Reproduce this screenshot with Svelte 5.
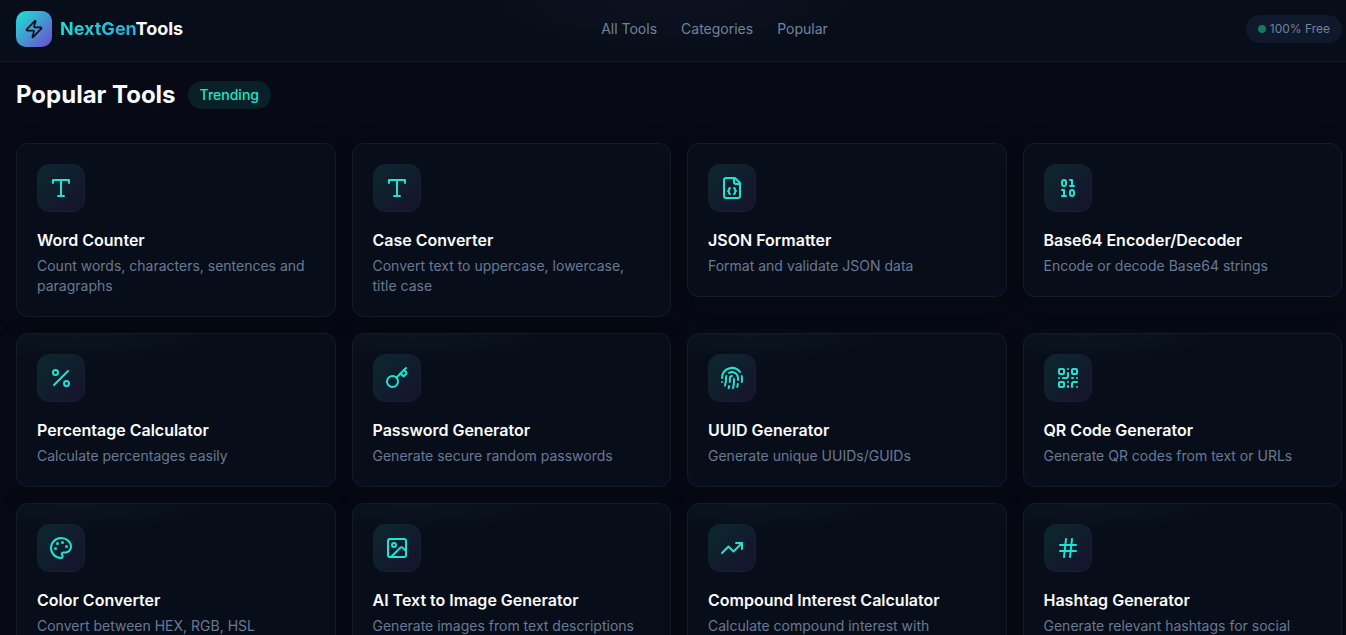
<script>
  const navLinks = [
    { label: 'All Tools', href: '#tools' },
    { label: 'Categories', href: '#categories' },
    { label: 'Popular', href: '#popular' }
  ];

  const tools = [
    { name: 'Word Counter', icon: 'type', description: 'Count words, characters, sentences and paragraphs' },
    { name: 'Case Converter', icon: 'type', description: 'Convert text to uppercase, lowercase, title case' },
    { name: 'JSON Formatter', icon: 'fileJson', description: 'Format and validate JSON data' },
    { name: 'Base64 Encoder/Decoder', icon: 'binary', description: 'Encode or decode Base64 strings' },
    { name: 'Percentage Calculator', icon: 'percent', description: 'Calculate percentages easily' },
    { name: 'Password Generator', icon: 'key', description: 'Generate secure random passwords' },
    { name: 'UUID Generator', icon: 'fingerprint', description: 'Generate unique UUIDs/GUIDs' },
    { name: 'QR Code Generator', icon: 'qrCode', description: 'Generate QR codes from text or URLs' },
    { name: 'Color Converter', icon: 'palette', description: 'Convert between HEX, RGB, HSL' },
    { name: 'AI Text to Image Generator', icon: 'image', description: 'Generate images from text descriptions' },
    { name: 'Compound Interest Calculator', icon: 'trendingUp', description: 'Calculate compound interest with different frequencies' },
    { name: 'Hashtag Generator', icon: 'hash', description: 'Generate relevant hashtags for social media' }
  ];
</script>

<header class="header">
  <a class="brand" href="#home">
    <span class="brand-mark">
      <svg viewBox="0 0 24 24" width="20" height="20" aria-hidden="true">
        <path d="M4 14a1 1 0 0 1-.78-1.63l9.9-10.2a.5.5 0 0 1 .86.46l-1.92 6.02A1 1 0 0 0 13 10h7a1 1 0 0 1 .78 1.63l-9.9 10.2a.5.5 0 0 1-.86-.46l1.92-6.02A1 1 0 0 0 11 14z" />
      </svg>
    </span>
    <span class="brand-name"><span class="brand-accent">NextGen</span>Tools</span>
  </a>

  <nav class="nav">
    {#each navLinks as link}
      <a href={link.href}>{link.label}</a>
    {/each}
  </nav>

  <div class="free-badge">
    <span class="dot"></span>
    <span>100% Free</span>
  </div>
</header>

<main class="main" id="popular">
  <div class="section-head">
    <h2>Popular Tools</h2>
    <span class="trending">Trending</span>
  </div>

  <div class="grid">
    {#each tools as tool}
      <a class="card" href="#tools">
        <span class="icon">
          <svg viewBox="0 0 24 24" width="24" height="24" aria-hidden="true">
            {#if tool.icon === 'type'}
              <path d="M4 7V4h16v3M9 20h6M12 4v16" />
            {:else if tool.icon === 'fileJson'}
              <path d="M15 2H6a2 2 0 0 0-2 2v16a2 2 0 0 0 2 2h12a2 2 0 0 0 2-2V7Z" />
              <path d="M14 2v4a2 2 0 0 0 2 2h4" />
              <path d="M10 12a1 1 0 0 0-1 1v1a1 1 0 0 1-1 1 1 1 0 0 1 1 1v1a1 1 0 0 0 1 1" />
              <path d="M14 18a1 1 0 0 0 1-1v-1a1 1 0 0 1 1-1 1 1 0 0 1-1-1v-1a1 1 0 0 0-1-1" />
            {:else if tool.icon === 'binary'}
              <rect x="14" y="14" width="4" height="6" rx="2" />
              <rect x="6" y="4" width="4" height="6" rx="2" />
              <path d="M6 20h4M14 10h4M6 14h2v6M14 4h2v6" />
            {:else if tool.icon === 'percent'}
              <path d="M19 5 5 19" />
              <circle cx="6.5" cy="6.5" r="2.5" />
              <circle cx="17.5" cy="17.5" r="2.5" />
            {:else if tool.icon === 'key'}
              <path d="m15.5 7.5 2.3 2.3a1 1 0 0 0 1.4 0l2.1-2.1a1 1 0 0 0 0-1.4L19 4" />
              <path d="m21 2-9.6 9.6" />
              <circle cx="7.5" cy="15.5" r="5.5" />
            {:else if tool.icon === 'fingerprint'}
              <path d="M12 10a2 2 0 0 0-2 2c0 1.02-.1 2.51-.26 4" />
              <path d="M14 13.12c0 2.38 0 6.38-1 8.88" />
              <path d="M17.29 21.02c.12-.6.43-2.3.5-3.02" />
              <path d="M2 12a10 10 0 0 1 18-6" />
              <path d="M2 16h.01" />
              <path d="M21.8 16c.2-2 .131-5.354 0-6" />
              <path d="M5 19.5C5.5 18 6 15 6 12a6 6 0 0 1 .34-2" />
              <path d="M8.65 22c.21-.66.45-1.32.57-2" />
              <path d="M9 6.8a6 6 0 0 1 9 5.2v2" />
            {:else if tool.icon === 'qrCode'}
              <rect width="5" height="5" x="3" y="3" rx="1" />
              <rect width="5" height="5" x="16" y="3" rx="1" />
              <rect width="5" height="5" x="3" y="16" rx="1" />
              <path d="M21 16h-3a2 2 0 0 0-2 2v3" />
              <path d="M21 21v.01" />
              <path d="M12 7v3a2 2 0 0 1-2 2H7" />
              <path d="M3 12h.01M12 3h.01M12 16v.01M16 12h1M21 12v.01M12 21v-1" />
            {:else if tool.icon === 'palette'}
              <circle class="fill" cx="13.5" cy="6.5" r=".5" />
              <circle class="fill" cx="17.5" cy="10.5" r=".5" />
              <circle class="fill" cx="8.5" cy="7.5" r=".5" />
              <circle class="fill" cx="6.5" cy="12.5" r=".5" />
              <path d="M12 2C6.5 2 2 6.5 2 12s4.5 10 10 10c.926 0 1.648-.746 1.648-1.688 0-.437-.18-.835-.437-1.125-.29-.289-.438-.652-.438-1.125a1.64 1.64 0 0 1 1.668-1.668h1.996c3.051 0 5.555-2.503 5.555-5.554C21.965 6.012 17.461 2 12 2z" />
            {:else if tool.icon === 'image'}
              <rect width="18" height="18" x="3" y="3" rx="2" />
              <circle cx="9" cy="9" r="2" />
              <path d="m21 15-3.086-3.086a2 2 0 0 0-2.828 0L6 21" />
            {:else if tool.icon === 'trendingUp'}
              <path d="m22 7-8.5 8.5-5-5L2 17" />
              <path d="M16 7h6v6" />
            {:else if tool.icon === 'hash'}
              <path d="M4 9h16M4 15h16M10 3 8 21M16 3l-2 18" />
            {/if}
          </svg>
        </span>
        <h3>{tool.name}</h3>
        <p>{tool.description}</p>
      </a>
    {/each}
  </div>
</main>

<style>
  :global(body) {
    background: #070a14;
    color: #f8fafc;
    font-family: Inter, 'Liberation Sans', sans-serif;
    font-size: 14px;
    line-height: 20px;
  }

  :global(html) {
    scrollbar-width: none;
  }

  a {
    color: inherit;
    text-decoration: none;
  }

  svg {
    fill: none;
    stroke: currentColor;
    stroke-width: 2;
    stroke-linecap: round;
    stroke-linejoin: round;
  }

  .header {
    display: flex;
    align-items: center;
    justify-content: space-between;
    padding: 11px 4px 14px 16px;
    background: radial-gradient(ellipse 180px 50px at 50% 0, #0c1220, #080e19);
    border-bottom: 1px solid #151c2a;
  }

  .brand {
    display: flex;
    align-items: center;
    gap: 8px;
  }

  .brand-mark {
    display: flex;
    align-items: center;
    justify-content: center;
    width: 36px;
    height: 36px;
    border-radius: 10px;
    background: linear-gradient(135deg, #19e6d4, #7048d0);
    color: #080d18;
  }

  .brand-name {
    font-size: 18px;
    font-weight: 700;
    line-height: 28px;
  }

  .brand-accent {
    background: linear-gradient(135deg, #19e6d4, #2ba5e0);
    background-clip: text;
    color: transparent;
  }

  .nav {
    display: flex;
    gap: 24px;
    color: #71829e;
  }

  .nav a:hover {
    color: #f8fafc;
  }

  .free-badge {
    display: flex;
    align-items: center;
    gap: 4px;
    padding: 4px 12px;
    border-radius: 14px;
    background: #10182b;
    color: #71829e;
    font-size: 12px;
  }

  .dot {
    width: 8px;
    height: 8px;
    border-radius: 50%;
    background: #127a60;
  }

  .main {
    padding: 17px 4px 32px 16px;
  }

  .section-head {
    display: flex;
    align-items: center;
    gap: 12px;
    margin-bottom: 32px;
  }

  h2 {
    margin: 0;
    font-size: 24px;
    font-weight: 700;
    line-height: 32px;
  }

  .trending {
    padding: 4px 12px;
    border-radius: 14px;
    background: #092126;
    color: #14e8cc;
    font-weight: 500;
  }

  .grid {
    display: grid;
    grid-template-columns: repeat(4, 1fr);
    align-items: start;
    gap: 16px;
  }

  .card {
    padding: 20px;
    border: 1px solid #141c2a;
    border-radius: 12px;
    background: #080e19;
    box-shadow: 0 4px 24px rgba(0, 0, 0, 0.15);
  }

  .card:nth-child(n + 5) {
    background: radial-gradient(ellipse 130px 26px at 60px 0, #0a1520, #080e19);
  }

  .card:hover {
    border-color: #1c4a52;
  }

  .icon {
    display: flex;
    align-items: center;
    justify-content: center;
    box-sizing: border-box;
    width: 48px;
    height: 48px;
    margin-bottom: 16px;
    border: 1px solid #142131;
    border-radius: 12px;
    background: linear-gradient(135deg, #0b282d, #17122d);
    color: #19e6d4;
  }

  .icon .fill {
    fill: currentColor;
  }

  h3 {
    margin: 0 0 4px;
    font-size: 16px;
    font-weight: 600;
    line-height: 24px;
  }

  p {
    margin: 0;
    color: #687993;
  }
</style>
